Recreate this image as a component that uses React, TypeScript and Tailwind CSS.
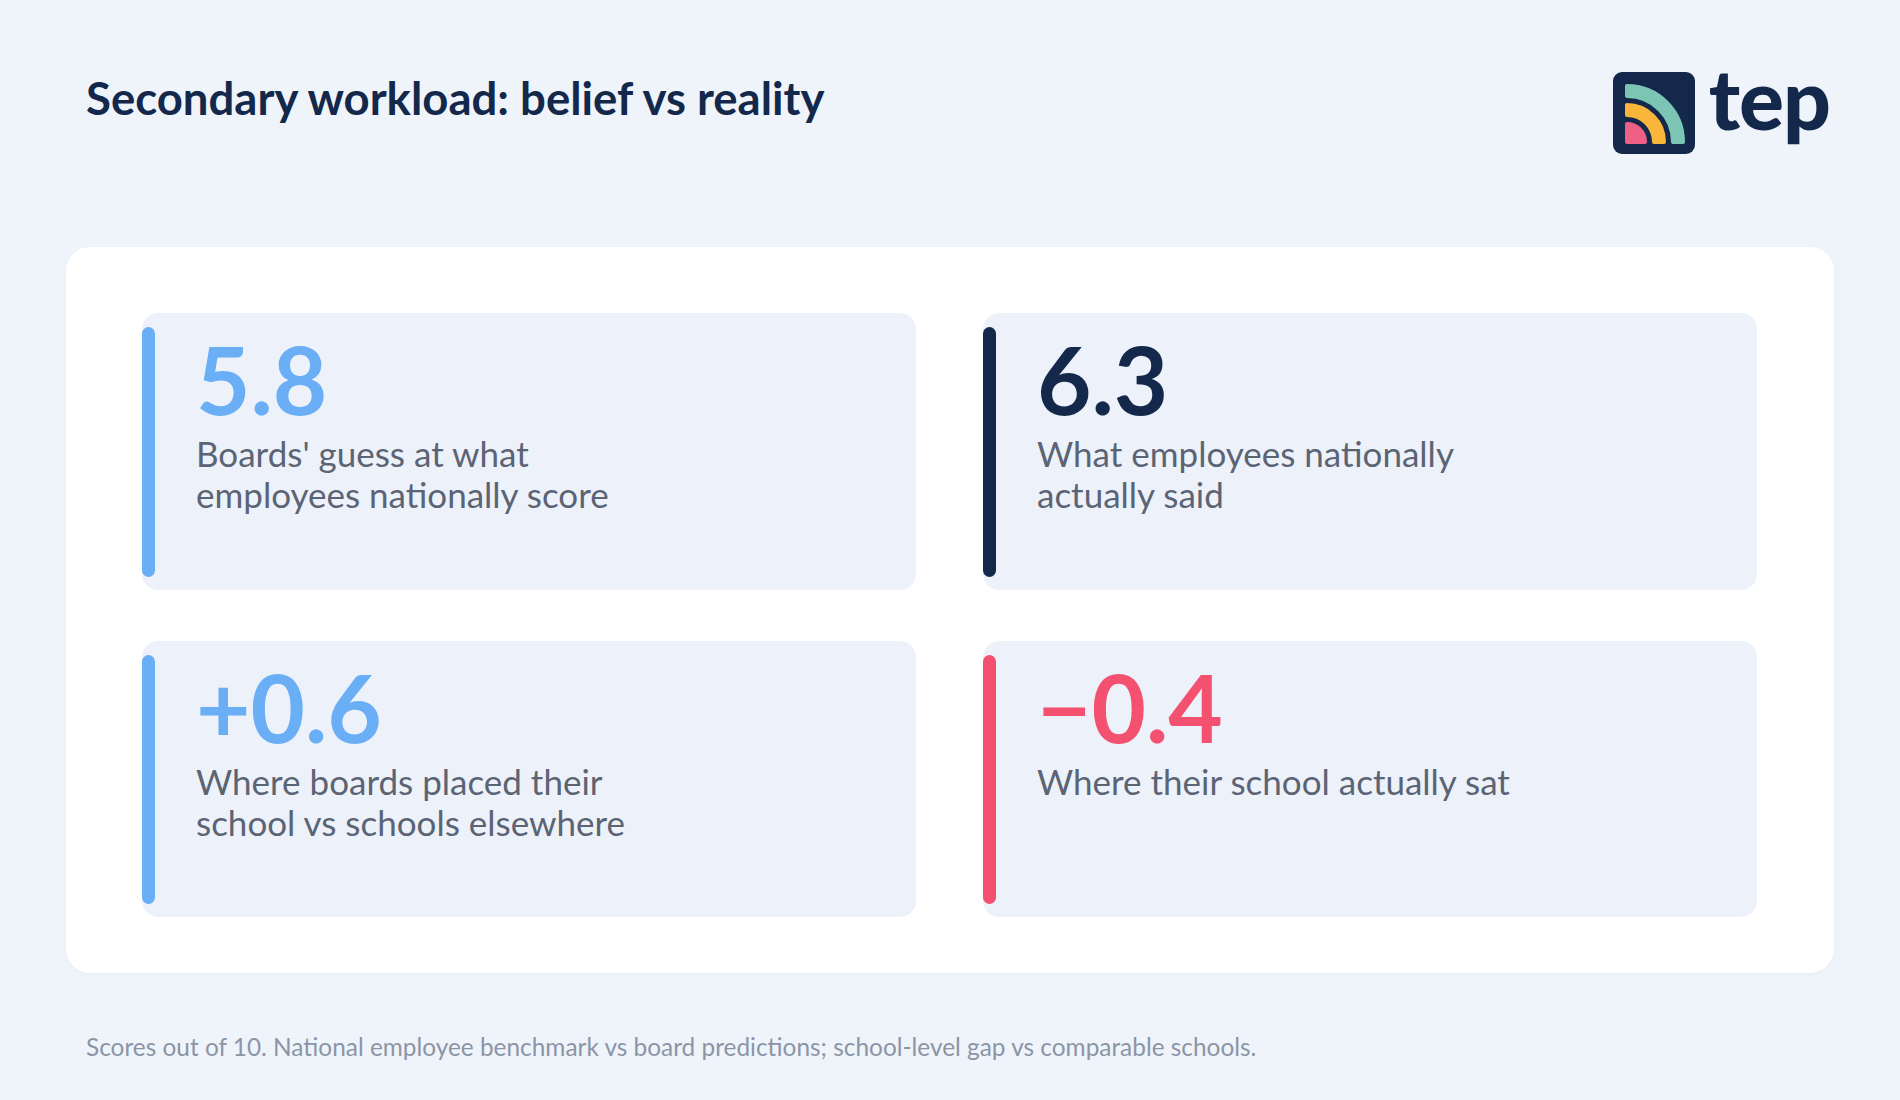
const stats = [
  {
    value: '5.8',
    label: "Boards' guess at what employees nationally score",
    valueClass: 'text-[#6aaef6]',
    barClass: 'bg-[#6aaef6]',
  },
  {
    value: '6.3',
    label: 'What employees nationally actually said',
    valueClass: 'text-[#13284a]',
    barClass: 'bg-[#13284a]',
  },
  {
    value: '+0.6',
    label: 'Where boards placed their school vs schools elsewhere',
    valueClass: 'text-[#6aaef6]',
    barClass: 'bg-[#6aaef6]',
  },
  {
    value: '\u22120.4',
    label: 'Where their school actually sat',
    valueClass: 'text-[#f4506f]',
    barClass: 'bg-[#f4506f]',
  },
];

function TepLogo() {
  return (
    <div className="flex items-start gap-[14px]">
      <svg width="82" height="82" viewBox="0 0 82 82" className="shrink-0">
        <rect x="0" y="0" width="82" height="82" rx="9" fill="#13284a" />
        <path
          d="M14 14 A56 56 0 0 1 70 70 L60 70 A46 46 0 0 0 14 24 Z"
          fill="#7cc5b4"
          stroke="#7cc5b4"
          strokeWidth="4"
          strokeLinejoin="round"
        />
        <path
          d="M14 33 A37 37 0 0 1 51 70 L41 70 A27 27 0 0 0 14 43 Z"
          fill="#f8b63a"
          stroke="#f8b63a"
          strokeWidth="4"
          strokeLinejoin="round"
        />
        <path
          d="M14 52 A18 18 0 0 1 32 70 L14 70 Z"
          fill="#ee5f86"
          stroke="#ee5f86"
          strokeWidth="4"
          strokeLinejoin="round"
        />
      </svg>
      <span className="-mt-[16px] text-[84px] font-black leading-none tracking-[-1px] text-[#13284a]">
        tep
      </span>
    </div>
  );
}

function StatTile({ value, label, valueClass, barClass }: (typeof stats)[number]) {
  return (
    <div className="flex rounded-2xl bg-[#edf2fa]">
      <div className={`mt-[14px] mb-[13px] w-[13px] shrink-0 rounded-full ${barClass}`} />
      <div className="pl-[41px] pt-[19px]">
        <div className={`text-[94px] font-bold leading-none ${valueClass}`}>{value}</div>
        <p className="mt-[7px] max-w-[485px] text-[35px] leading-[41px] text-[#5b6475]">{label}</p>
      </div>
    </div>
  );
}

export default function App() {
  return (
    <div
      className="min-h-screen bg-[#eff4fb] px-[66px]"
      style={{ fontFamily: 'Lato, "Noto Sans", sans-serif' }}
    >
      {/* Header */}
      <header className="flex items-start justify-between pl-[20px] pr-[4px] pt-[72px]">
        <h1 className="-mt-[1px] text-[45.5px] font-bold leading-[1.2] text-[#13284a]">
          Secondary workload: belief vs reality
        </h1>
        <TepLogo />
      </header>

      {/* Stats card */}
      <section className="mt-[93px] rounded-3xl bg-white pb-[56px] pl-[76px] pr-[77px] pt-[66px] shadow-[0_1px_3px_rgba(19,40,74,0.04)]">
        <div className="grid grid-cols-2 grid-rows-[277px_276px] gap-x-[67px] gap-y-[51px]">
          {stats.map((s) => (
            <StatTile key={s.value} {...s} />
          ))}
        </div>
      </section>

      {/* Footnote */}
      <p className="mt-[56px] pl-[20px] text-[24.4px] leading-[1.5] text-[#8b95a6]">
        Scores out of 10. National employee benchmark vs board predictions; school-level gap vs comparable schools.
      </p>
    </div>
  );
}
